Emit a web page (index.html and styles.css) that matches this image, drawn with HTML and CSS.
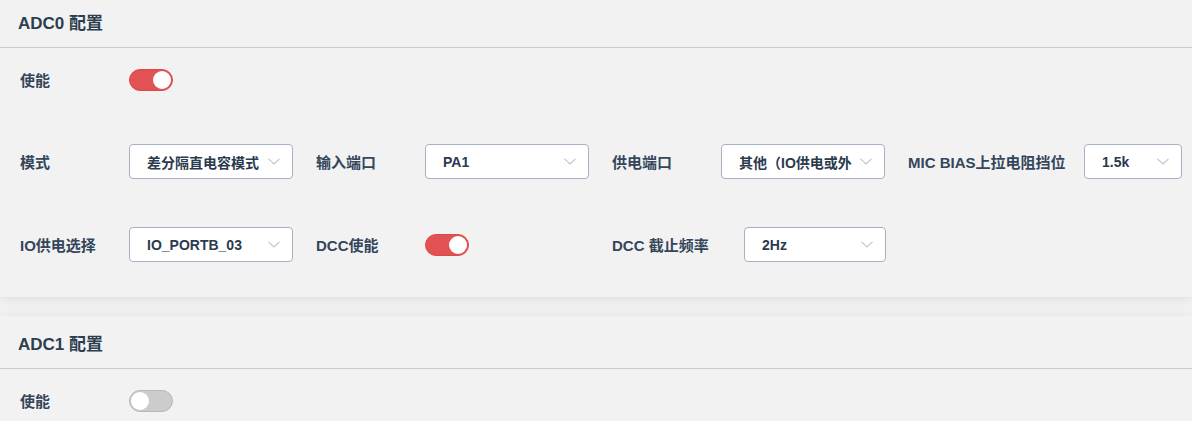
FILE: index.html
```html
<!DOCTYPE html>
<html lang="zh-CN">
<head>
<meta charset="utf-8">
<title>ADC 配置</title>
<link rel="stylesheet" href="styles.css">
</head>
<body>
<div class="page">
  <section class="card first">
    <div class="card-header">ADC0 配置</div>
    <div class="card-body">
      <div class="row">
        <div class="item">
          <span class="label">使能</span>
          <span class="switch on"><span class="knob"></span></span>
        </div>
      </div>
      <div class="row">
        <div class="item">
          <span class="label">模式</span>
          <div class="select"><span class="value">差分隔直电容模式</span><svg class="chev" viewBox="0 0 12 7"><path d="M0.5 0.8 L6 6 L11.5 0.8"/></svg></div>
        </div>
        <div class="item">
          <span class="label">输入端口</span>
          <div class="select"><span class="value">PA1</span><svg class="chev" viewBox="0 0 12 7"><path d="M0.5 0.8 L6 6 L11.5 0.8"/></svg></div>
        </div>
        <div class="item">
          <span class="label">供电端口</span>
          <div class="select"><span class="value">其他（IO供电或外部供电）</span><svg class="chev" viewBox="0 0 12 7"><path d="M0.5 0.8 L6 6 L11.5 0.8"/></svg></div>
        </div>
        <div class="item">
          <span class="label wide">MIC BIAS上拉电阻挡位</span>
          <div class="select small"><span class="value">1.5k</span><svg class="chev" viewBox="0 0 12 7"><path d="M0.5 0.8 L6 6 L11.5 0.8"/></svg></div>
        </div>
      </div>
      <div class="row">
        <div class="item">
          <span class="label">IO供电选择</span>
          <div class="select"><span class="value">IO_PORTB_03</span><svg class="chev" viewBox="0 0 12 7"><path d="M0.5 0.8 L6 6 L11.5 0.8"/></svg></div>
        </div>
        <div class="item">
          <span class="label">DCC使能</span>
          <span class="switch on"><span class="knob"></span></span>
        </div>
        <div class="item">
          <span class="label mid">DCC 截止频率</span>
          <div class="select medium"><span class="value">2Hz</span><svg class="chev" viewBox="0 0 12 7"><path d="M0.5 0.8 L6 6 L11.5 0.8"/></svg></div>
        </div>
      </div>
    </div>
  </section>
  <section class="card">
    <div class="card-header">ADC1 配置</div>
    <div class="card-body">
      <div class="row">
        <div class="item">
          <span class="label">使能</span>
          <span class="switch"><span class="knob"></span></span>
        </div>
      </div>
    </div>
  </section>
</div>
</body>
</html>
```

FILE: styles.css
```css
html, body {
  margin: 0;
  padding: 0;
  background: #f2f2f2;
  height: 100%;
  overflow: hidden;
}
body {
  font-family: "Liberation Sans", Arial, "Noto Sans CJK SC", sans-serif;
  color: #2c3e50;
}
.page {
  display: flex;
  flex-direction: column;
  gap: 19px;
}
.card {
  background: #f2f2f2;
  box-shadow: 0 2px 12px 0 rgba(0, 0, 0, 0.09);
}
.card.first {
  margin-top: -5px;
}
.card-header {
  height: 53px;
  border-bottom: 1px solid #cccccc;
  display: flex;
  align-items: center;
  padding-left: 18px;
  box-sizing: border-box;
  font-size: 17px;
  font-weight: bold;
  color: #2c3e50;
}
.card-body {
  padding: 14px 20px 35px 20px;
  display: flex;
  flex-direction: column;
  gap: 47px;
}
.row + .row + .row {
  margin-top: 1px;
}
.row {
  display: flex;
  gap: 23px;
  height: 35px;
}
.item {
  display: flex;
  align-items: center;
  width: 273px;
}
.label {
  width: 109px;
  flex: none;
  font-size: 15px;
  font-weight: bold;
  color: #34465a;
}
.label.mid { width: 132px; }
.label.wide { width: 176px; }
.select {
  box-sizing: border-box;
  width: 164px;
  height: 35px;
  flex: none;
  background: #ffffff;
  border: 1px solid #a9b0c4;
  border-radius: 4px;
  display: flex;
  align-items: center;
  padding-left: 17px;
  padding-right: 12px;
  gap: 8px;
}
.select.medium { width: 142px; }
.select.small { width: 98px; }
.value {
  flex: 1;
  min-width: 0;
  overflow: hidden;
  white-space: nowrap;
  font-size: 14px;
  font-weight: bold;
  color: #2b3a4d;
}
.chev {
  width: 12px;
  height: 7px;
  flex: none;
  fill: none;
  stroke: #c0c4cc;
  stroke-width: 1.1;
}
.switch {
  box-sizing: border-box;
  width: 44px;
  height: 22px;
  border-radius: 11px;
  background: #cccccc;
  border: 1px solid #b8b8b8;
  display: flex;
  align-items: center;
  padding: 0 1px;
}
.switch .knob {
  width: 18px;
  height: 18px;
  border-radius: 50%;
  background: #ffffff;
}
.switch.on {
  background: #e25252;
  border-color: #d94a4a;
  justify-content: flex-end;
}
```
